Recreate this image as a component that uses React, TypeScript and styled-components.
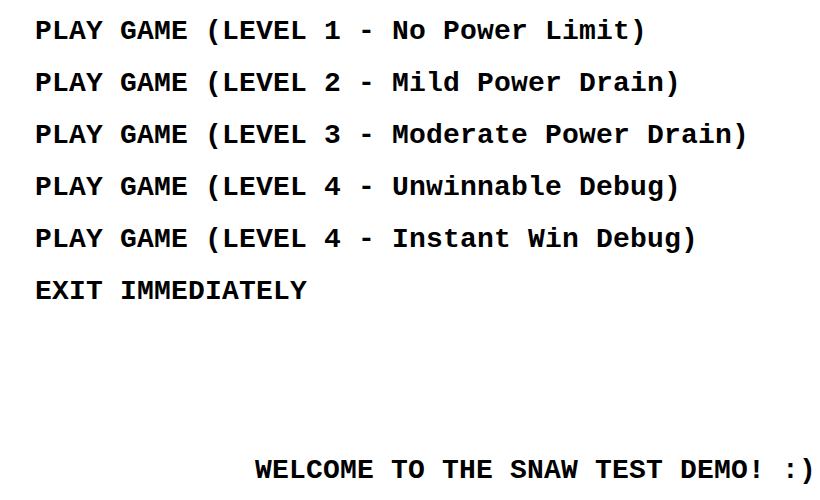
import React from 'react'
import styled, { createGlobalStyle } from 'styled-components';

const GlobalStyle = createGlobalStyle`
    html, body {
        margin: 0;
        padding: 0;
        background: #fff;
    }
    body {
        font-family: "Liberation Mono", "Courier New", monospace;
    }
`

const levels = [
    'PLAY GAME (LEVEL 1 - No Power Limit)',
    'PLAY GAME (LEVEL 2 - Mild Power Drain)',
    'PLAY GAME (LEVEL 3 - Moderate Power Drain)',
    'PLAY GAME (LEVEL 4 - Unwinnable Debug)',
    'PLAY GAME (LEVEL 4 - Instant Win Debug)',
    'EXIT IMMEDIATELY',
]

const App: React.FC = () => {
    return (
        <>
            <GlobalStyle />
            <Screen>
                <Menu>
                    {levels.map((label) => (
                        <MenuItem key={label}>{label}</MenuItem>
                    ))}
                </Menu>
                <Footer>WELCOME TO THE SNAW TEST DEMO! :)</Footer>
            </Screen>
        </>
    )
}

export default App;

const Screen = styled.div`
    width: 820px;
    height: 500px;
    display: flex;
    flex-direction: column;
    background: #fff;
    color: #000;
    font-size: 28px;
    font-weight: 700;
    letter-spacing: 0.2px;
    white-space: pre;
    overflow: hidden;
`

const Menu = styled.ul`
    list-style: none;
    margin: 0;
    padding: 6px 0 0 35px;
`

const MenuItem = styled.li`
    line-height: 52px;
    cursor: pointer;
`

const Footer = styled.div`
    margin-top: auto;
    line-height: 52px;
    padding: 0 4px 3px 0;
    text-align: right;
`
